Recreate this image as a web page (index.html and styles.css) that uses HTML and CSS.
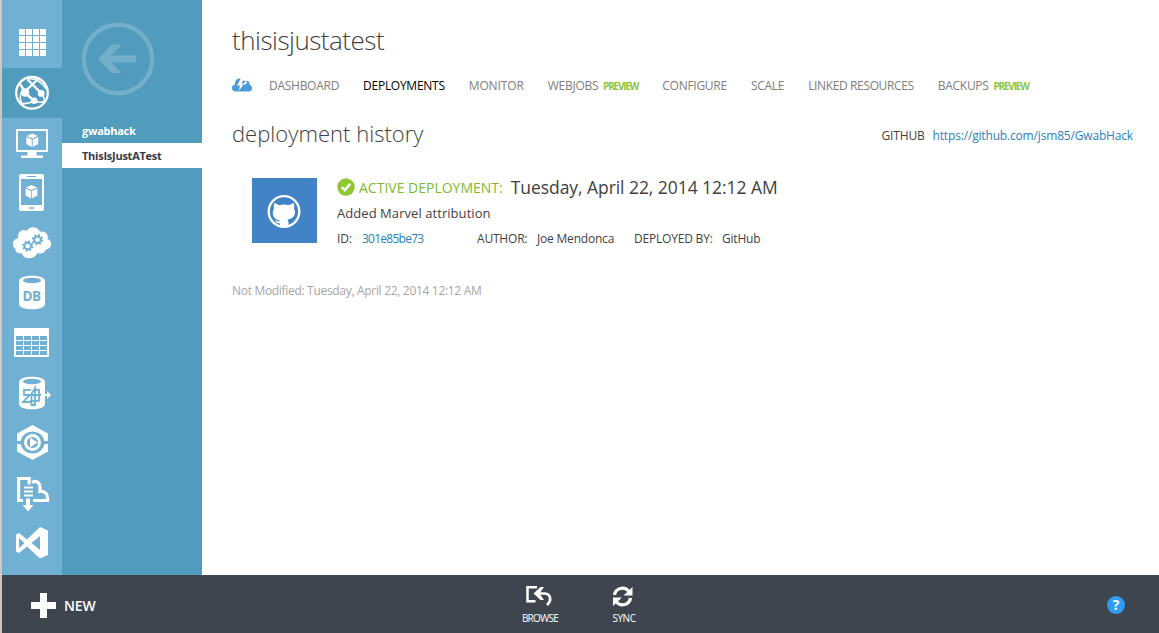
FILE: index.html
```html
<!DOCTYPE html>
<html lang="en">
<head>
<meta charset="utf-8">
<title>thisisjustatest</title>
<link rel="stylesheet" href="styles.css">
</head>
<body>
<div class="shell">
  <div class="workspace">
    <nav class="rail">
      <svg class="rail-item" viewBox="2 18 60 50"><path fill="#fff" d="M19 29h6v6h-6zM26 29h6v6h-6zM33 29h6v6h-6zM40 29h6v6h-6zM19 36h6v6h-6zM26 36h6v6h-6zM33 36h6v6h-6zM40 36h6v6h-6zM19 43h6v6h-6zM26 43h6v6h-6zM33 43h6v6h-6zM40 43h6v6h-6zM19 50h6v6h-6zM26 50h6v6h-6zM33 50h6v6h-6zM40 50h6v6h-6z"/></svg>
      <svg class="rail-item active" viewBox="2 68 60 50"><g fill="none" stroke="#fff"><circle cx="32" cy="92.800" r="15.800" stroke-width="2.300"/><path stroke-width="1.500" d="M28 79Q38 77.500 46.500 89M22 91Q18 98 23 105M21 104q8-.5 13-3M34 101q5 2 10 .5M41 94q4 3 3 7"/><path stroke-width="2.400" d="M27.500 79.500L41 93M38 79L25 91.500M25 93l9.500 8M20 84l4.500 7"/></g><g fill="#fff"><circle cx="25" cy="92.500" r="4.300"/><circle cx="41.200" cy="93.400" r="3.400"/><circle cx="34.200" cy="100.800" r="3.200"/></g></svg>
      <svg class="rail-item" viewBox="2 118 60 50"><path fill="none" stroke="#fff" stroke-width="2" d="M17 130h30v21H17z"/><path fill="#fff" d="M27.500 152h9v3.500h6.500v2.500H21v-2.500h6.500zM32.200 133.500l5.500 2.500-5.500 2.500-5.500-2.500zM26.300 137l5.500 2.500v7.500l-5.500-3zM38.200 137l-5.500 2.500v7.500l5.500-3z"/></svg>
      <svg class="rail-item" viewBox="2 168 60 50"><path fill="#fff" fill-rule="evenodd" d="M21 174h21q2 0 2 2v33q0 2-2 2H21q-2 0-2-2v-33q0-2 2-2zM21 179v26h21v-26zM27 176v1h9v-1zM29 207.300v1.400h5v-1.400z"/><path fill="#fff" d="M31.500 185l5.500 2.500-5.500 2.500-5.500-2.500zM25.600 188.500l5.500 2.500v7.500l-5.500-3zM37.400 188.500l-5.500 2.500v7.500l5.500-3z"/></svg>
      <svg class="rail-item" viewBox="2 218 60 50"><path fill="#fff" d="M18 238.500C17 233 22 228 26.500 231C29 226 38 225.500 40 232C45 230 49 235 47.500 239C53 241 52 249 46 249.500C45 253 41 254.500 37.500 253C34 260 24 260 22 253.500C17 254 15 251 15.500 249C11 246 12.500 239 18 238.500Z"/><g fill="none" stroke="#70b0d3"><circle cx="27.700" cy="246" r="3.300" stroke-width="2"/><circle cx="27.700" cy="246" r="4.800" stroke-width="1.800" stroke-dasharray="1.900 1.870"/><circle cx="37.500" cy="239.700" r="3.300" stroke-width="2"/><circle cx="37.500" cy="239.700" r="4.800" stroke-width="1.800" stroke-dasharray="1.900 1.870"/></g></svg>
      <svg class="rail-item" viewBox="2 268 60 50"><path fill="#fff" d="M19 281c0-7 26-7 26 0v23c0 7-26 7-26 0z"/><ellipse cx="32" cy="280.500" rx="9" ry="2.700" fill="#70b0d3"/><text class="db-label" x="22.500" y="300.500" textLength="18.500">DB</text></svg>
      <svg class="rail-item" viewBox="2 318 60 50"><rect x="14" y="328" width="35" height="29" rx="1.200" fill="#fff"/><path fill="#70b0d3" d="M16 336h7v4h-7zM24 336h7v4h-7zM32 336h7v4h-7zM40 336h7v4h-7zM16 341h7v4h-7zM24 341h7v4h-7zM32 341h7v4h-7zM40 341h7v4h-7zM16 346h7v4h-7zM24 346h7v4h-7zM32 346h7v4h-7zM40 346h7v4h-7zM16 351h7v4h-7zM24 351h7v4h-7zM32 351h7v4h-7zM40 351h7v4h-7z"/></svg>
      <svg class="rail-item" viewBox="2 368 60 50"><path fill="#fff" d="M19 382c0-7 26-7 26 0v22c0 7-26 7-26 0z"/><ellipse cx="32" cy="381.500" rx="9" ry="2.700" fill="#70b0d3"/><path fill="none" stroke="#70b0d3" stroke-width="1.800" d="M31 389.800h-7v5h6l-7 7.200h8M31.500 394l3.500-6v17h-3.500zM35 389.800h4v11h-9M24 395h21"/><path fill="#fff" d="M41 394h6v-3l4 4-4 4v-3h-6z"/></svg>
      <svg class="rail-item" viewBox="2 418 60 50"><path fill="#fff" d="M17 441v-7.500L32.500 425l15.500 8.500v7.500h-3.500a12.300 12.300 0 0 0-24 0zM17 444v7.500L32.500 460l15.500-8.500V444h-3.500a12.300 12.300 0 0 1-24 0z"/><circle cx="32.500" cy="442.500" r="7" fill="none" stroke="#fff" stroke-width="2.900"/><path fill="#fff" d="M30 437.500l7.500 5-7.500 5z"/></svg>
      <svg class="rail-item" viewBox="2 468 60 50"><path fill="none" stroke="#fff" stroke-width="3.200" d="M23 500.500h-4.400v-22h10.500v6M32 482.500c4-2.500 8 0 8 5v4c4-1 7.500 2 7.500 6v3H33"/><path fill="#fff" d="M24 486.500h9v2h-9zM24 490.500h9v2h-9zM24 494.500h9v2h-9zM26 498.500h4v6.500h3.500L28 511.500 22.500 505H26z"/></svg>
      <svg class="rail-item" viewBox="2 518 60 50"><path fill="#fff" fill-rule="evenodd" d="M16 534.500l3-1.500 8 6.500L40 527l8 3.500V555l-8 3.500L27 546.500l-8 6.500-3-1.500zM19 538v10l5.500-5zM40 536l-8.500 7 8.500 7z"/></svg>
    </nav>
    <aside class="sites">
      <svg class="back" viewBox="0 0 74 74"><circle cx="37" cy="37" r="34.200" fill="none" stroke="#73aecb" stroke-width="4.400"/><path fill="#73aecb" d="M17 37L31 22.500h9.500L30.500 33.500H55v7H30.500L40.500 51H31z"/></svg>
      <a class="site">gwabhack</a>
      <a class="site selected">ThisIsJustATest</a>
    </aside>
    <main class="content">
      <h1 class="title">thisisjustatest</h1>
      <nav class="tabs">
        <svg class="quickstart" viewBox="232 77 20 14"><path fill="#4a9bd8" d="M236 90.500c-5 0-5.500-6-1-7-.5-5 3-7.200 7-5.500 1 .5 2 1.500 2.300 2.500 3-2 5.700 0 5.200 3 4 1.500 3 7-.5 7z"/><path fill="#fff" d="M240.500 78l-3.500 6.500h3l-1 5.500 5-7.500h-2.500l2.500-4.500zM243.500 82.500l2.500-2 1.500 .5-2.500 3z"/></svg>
        <a class="tab">DASHBOARD</a>
        <a class="tab current">DEPLOYMENTS</a>
        <a class="tab monitor">MONITOR</a>
        <a class="tab">WEBJOBS <b class="preview">PREVIEW</b></a>
        <a class="tab">CONFIGURE</a>
        <a class="tab">SCALE</a>
        <a class="tab resources">LINKED RESOURCES</a>
        <a class="tab">BACKUPS <b class="preview">PREVIEW</b></a>
      </nav>
      <div class="section-head">
        <h2 class="section-title">deployment history</h2>
        <div class="repo"><span class="repo-name">GITHUB</span><a class="link repo-link">https://github.com/jsm85/GwabHack</a></div>
      </div>
      <article class="deployment">
        <svg class="avatar" viewBox="252 178 65 65"><path fill="#4183c4" d="M252 178h65v65h-65z"/><circle cx="284" cy="211.500" r="15.300" fill="none" stroke="#fff" stroke-width="2.300"/><path fill="#fff" d="M274.500 203l5 2.200c3-.8 6-.8 9 0l5-2.200c1 2 1 4 .4 5.500 2.500 4.500 1 10-6.400 11l1 2.500v4.500h-8.500v-3c-3 0-4-1-5.300-3.500 2 1 4 2 5.500 .5-7-1-9-6.500-6.200-12-.5-2-.4-4 .5-5.500z"/></svg>
        <div class="details">
          <div class="headline"><svg class="check" viewBox="0 0 18 18"><circle cx="9" cy="9" r="8.700" fill="#8cc832"/><path fill="none" stroke="#fff" stroke-width="2.500" d="M4.800 9.200l3 3 5.300-6.300"/></svg><span class="status">ACTIVE DEPLOYMENT:</span><span class="date">Tuesday, April 22, 2014 12:12 AM</span></div>
          <div class="message">Added Marvel attribution</div>
          <div class="meta"><span class="id-label">ID:</span><a class="link commit">301e85be73</a><span class="author-label">AUTHOR:</span><span class="author">Joe Mendonca</span><span class="by-label">DEPLOYED BY:</span><span>GitHub</span></div>
        </div>
      </article>
      <p class="modified">Not Modified: Tuesday, April 22, 2014 12:12 AM</p>
    </main>
  </div>
  <footer class="drawer">
    <button class="new"><svg class="plus" viewBox="0 0 25 25"><path fill="#fff" d="M9 0h7v9h9v7h-9v9H9v-9H0V9h9z"/></svg>NEW</button>
    <div class="commands">
      <button class="command browse"><svg class="command-icon" viewBox="526 584 28 24"><g fill="none" stroke="#fff" stroke-width="2.500"><path d="M537 587.300h-9.500v14h8"/><path stroke-width="2.700" d="M537 593.500h7c7 0 8 7 3 11.500"/></g><path fill="#fff" d="M533.500 593.500l7-6.500h3.500l-4.500 6.500 4.500 6.500h-3.500z"/></svg>BROWSE</button>
      <button class="command sync"><svg class="command-icon" viewBox="610 584 28 24"><g fill="none" stroke="#fff" stroke-width="3.300"><path d="M614.500 595a8 8 0 0 1 14-4"/><path d="M630.500 598a8 8 0 0 1-14 4"/></g><path fill="#fff" d="M632.500 587v8.500h-9zM613 606V597.500h9z"/></svg>SYNC</button>
    </div>
    <svg class="help" viewBox="0 0 18 18"><circle cx="9" cy="9" r="9" fill="#2f9df4"/><text class="help-mark" x="9" y="14" text-anchor="middle">?</text></svg>
  </footer>
</div>
</body>
</html>
```

FILE: styles.css
```css
* { box-sizing: border-box; }
body {
  margin: 0;
  background: #fff;
  color: #3f3f3f;
  font-family: "Open Sans", "Noto Sans", sans-serif;
  font-size: 12px;
}
.shell {
  display: flex;
  flex-direction: column;
  width: 1159px;
  height: 633px;
  border-left: 2px solid #cbc8c6;
  overflow: hidden;
}
.workspace { display: flex; height: 575px; }
.rail {
  display: flex;
  flex-direction: column;
  width: 60px;
  padding-top: 18px;
  background: #70b0d3;
}
.rail-item { display: block; width: 60px; height: 50px; }
.rail-item.active { background: #519bbc; }
.db-label { font-size: 13.5px; font-weight: 700; fill: #70b0d3; }
.sites {
  display: flex;
  flex-direction: column;
  width: 140px;
  padding-top: 22px;
  background: #519bbc;
}
.back { width: 74px; height: 74px; margin: 0 0 22px 18.5px; }
.site {
  height: 25px;
  padding-left: 20px;
  color: #fff;
  font-size: 11px;
  font-weight: 700;
  line-height: 25px;
  letter-spacing: -0.25px;
}
.site.selected { background: #fff; color: #353a45; }
.content { flex: 1; padding: 19px 24px 0 30px; white-space: nowrap; }
.title {
  margin: 0;
  font-size: 26px;
  font-weight: 300;
  line-height: 42px;
  letter-spacing: -0.5px;
}
.tabs {
  display: flex;
  align-items: center;
  gap: 24px;
  height: 24px;
  margin-top: 13px;
  color: #7e7e7e;
  letter-spacing: -0.27px;
}
.quickstart { width: 20px; height: 14px; margin: -2px -7px 0 0; }
.tab { line-height: 24px; }
.tab.current { color: #000; }
.monitor { letter-spacing: -0.12px; }
.resources { letter-spacing: -0.37px; }
.preview {
  margin-left: 2px;
  color: #8cc63f;
  font-size: 10px;
  letter-spacing: -1.2px;
}
.section-head {
  display: flex;
  justify-content: space-between;
  height: 40px;
  margin-top: 16px;
}
.section-title {
  margin: 0;
  font-size: 22px;
  font-weight: 300;
  line-height: 38px;
  letter-spacing: 0.03px;
}
.repo { display: flex; gap: 8px; padding-right: 2px; line-height: 43px; letter-spacing: -0.17px; }
.link { color: #2b7fc0; }
.deployment { display: flex; gap: 20px; margin: 24px 0 0 20px; }
.avatar { width: 65px; height: 65px; }
.details { display: flex; flex-direction: column; }
.headline { display: flex; align-items: center; height: 18px; }
.check { width: 18px; height: 18px; margin-right: 4px; }
.status { margin-right: 8px; color: #7cbb32; font-size: 14px; }
.date { margin-top: -1px; font-size: 17.5px; letter-spacing: -0.06px; }
.message { height: 26px; margin-top: 4px; font-size: 13px; line-height: 26px; letter-spacing: 0.06px; }
.meta { display: flex; height: 24px; margin-top: 1px; font-size: 12px; line-height: 24px; letter-spacing: -0.2px; }
.id-label { width: 25px; }
.commit { width: 115px; letter-spacing: -0.75px; }
.author-label { width: 60px; }
.author { width: 97px; }
.by-label { width: 88px; }
.modified {
  margin: 28px 0 0;
  color: #a6a6a6;
  font-size: 12px;
  line-height: 24px;
  letter-spacing: -0.31px;
}
.drawer {
  display: flex;
  align-items: center;
  height: 58px;
  padding: 0 34px 0 29px;
  background: #3e454f;
}
.new, .command {
  display: flex;
  align-items: center;
  padding: 0;
  border: 0;
  background: none;
  color: #fff;
  font-family: inherit;
}
.new {
  gap: 8px;
  width: 482px;
  margin-top: 2px;
  font-size: 14px;
  font-weight: 600;
  letter-spacing: -0.1px;
}
.plus { width: 25px; height: 25px; }
.commands { display: flex; flex: 1; height: 58px; padding-top: 9px; }
.command {
  flex-direction: column;
  width: 54px;
  font-size: 10px;
  line-height: 20px;
  letter-spacing: -0.75px;
}
.sync { margin-left: 30px; letter-spacing: -0.5px; }
.command-icon { width: 28px; height: 24px; }
.help { width: 18px; height: 18px; margin-top: 2px; }
.help-mark { fill: #fff; font-size: 14px; font-weight: 700; }
```
